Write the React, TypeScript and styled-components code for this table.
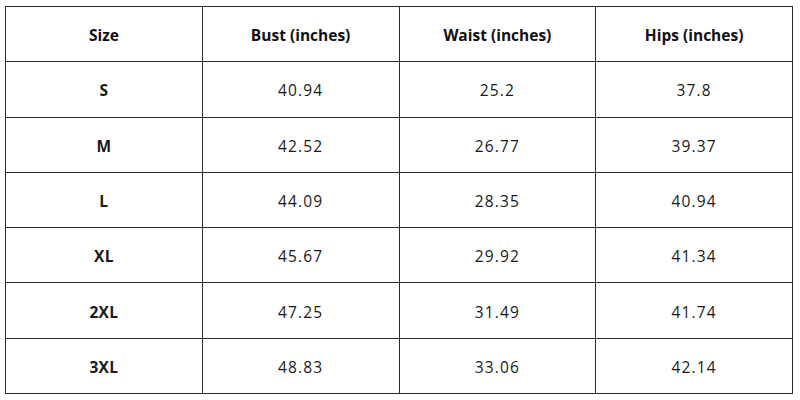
import styled, { createGlobalStyle } from 'styled-components';

const GlobalStyle = createGlobalStyle`
  body {
    margin: 0;
    background: #ffffff;
    font-family: 'Open Sans', 'Liberation Sans', sans-serif;
  }
`;

const headers = ['Size', 'Bust (inches)', 'Waist (inches)', 'Hips (inches)'];

const rows = [
  ['S', '40.94', '25.2', '37.8'],
  ['M', '42.52', '26.77', '39.37'],
  ['L', '44.09', '28.35', '40.94'],
  ['XL', '45.67', '29.92', '41.34'],
  ['2XL', '47.25', '31.49', '41.74'],
  ['3XL', '48.83', '33.06', '42.14'],
];

export default function App() {
  return (
    <Page>
      <GlobalStyle />
      <SizeTable>
        <thead>
          <Row>
            {headers.map((h) => (
              <HeadCell key={h}>{h}</HeadCell>
            ))}
          </Row>
        </thead>
        <tbody>
          {rows.map((r) => (
            <Row key={r[0]}>
              <Cell $bold>{r[0]}</Cell>
              {r.slice(1).map((v, i) => (
                <Cell key={i}>{v}</Cell>
              ))}
            </Row>
          ))}
        </tbody>
      </SizeTable>
    </Page>
  );
}

const Page = styled.div`
  padding: 6px 7px 6px 5px;
`;

const SizeTable = styled.table`
  width: 788px;
  border-collapse: collapse;
  table-layout: fixed;
`;

const Row = styled.tr`
  height: 55.3px;
`;

const HeadCell = styled.th`
  border: 1px solid #2a2a2a;
  font-size: 15.5px;
  font-weight: 700;
  color: #111;
  text-align: center;
  vertical-align: middle;
  padding: 1px 0 0;
`;

const Cell = styled.td<{ $bold?: boolean }>`
  border: 1px solid #2a2a2a;
  font-size: 15.5px;
  font-weight: ${(p) => (p.$bold ? 700 : 400)};
  letter-spacing: ${(p) => (p.$bold ? '0.3px' : '1.1px')};
  color: #1a1a1a;
  text-align: center;
  vertical-align: middle;
  padding: 2px 0 0;
`;
